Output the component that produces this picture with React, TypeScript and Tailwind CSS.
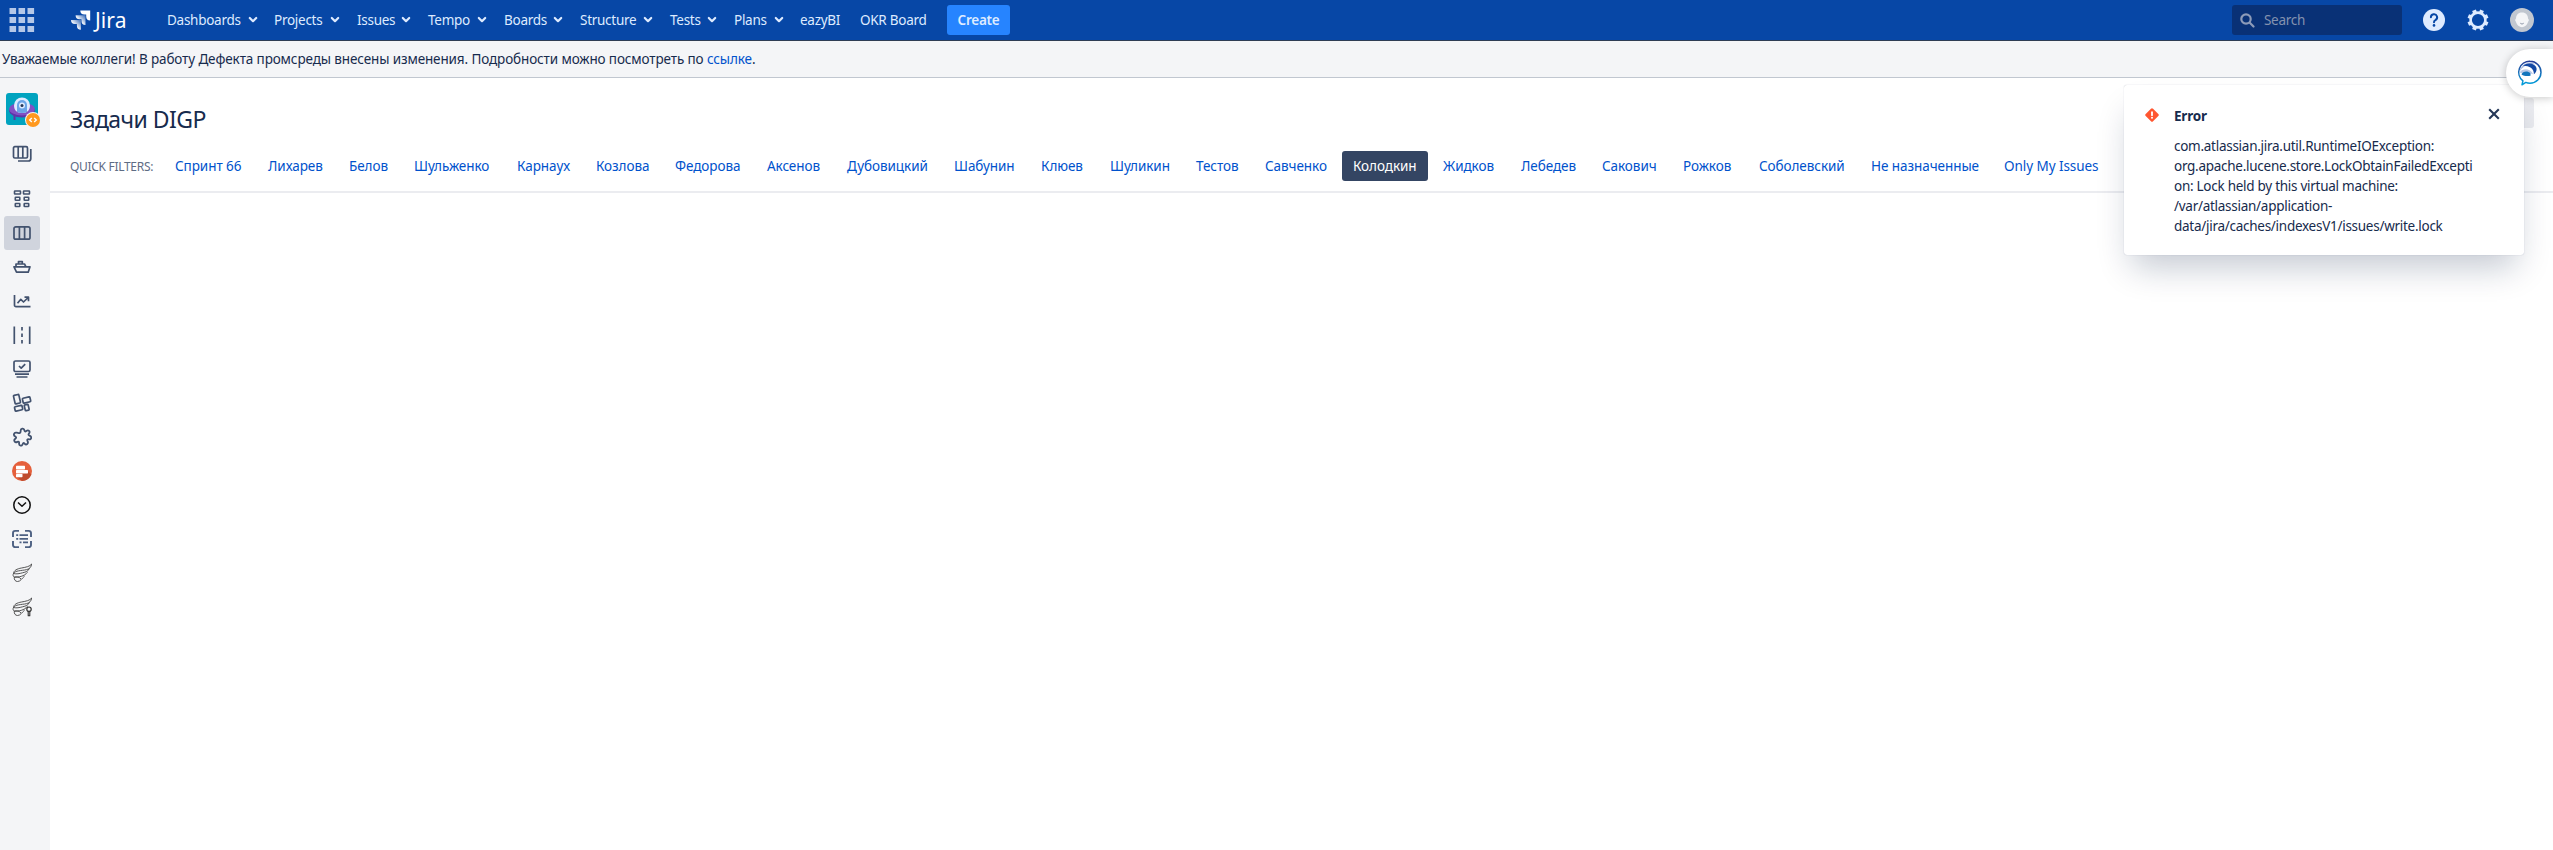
import React, { ReactNode } from 'react';

const Chevron = () => (
  <svg width="10" height="8" viewBox="0 0 10 8" className="shrink-0" fill="none" stroke="currentColor" strokeWidth="2.2" strokeLinecap="round" strokeLinejoin="round">
    <path d="M1.800 2 5 5.200 8.200 2" />
  </svg>
);

type NavProps = { label: string; width: string; text?: string; menu?: boolean };

const NavItem = ({ label, width, text = '', menu = true }: NavProps) => (
  <a className={`flex shrink-0 items-center whitespace-nowrap ${width}`}>
    <span className={`shrink-0 ${text}`}>{label}</span>
    {menu && <Chevron />}
  </a>
);

const filters: [string, string][] = [
  ['Спринт 66', 'w-[93px]'],
  ['Лихарев', 'w-[81px]'],
  ['Белов', 'w-[65px]'],
  ['Шульженко', 'w-[103px]'],
  ['Карнаух', 'w-[79px]'],
  ['Козлова', 'w-[79px]'],
  ['Федорова', 'w-[92px]'],
  ['Аксенов', 'w-[80px]'],
  ['Дубовицкий', 'w-[107px]'],
  ['Шабунин', 'w-[87px]'],
  ['Клюев', 'w-[69px]'],
  ['Шуликин', 'w-[86px]'],
  ['Тестов', 'w-[69px]'],
  ['Савченко', 'w-[88px]'],
  ['Колодкин', 'w-[90px]'],
  ['Жидков', 'w-[78px]'],
  ['Лебедев', 'w-[81px]'],
  ['Сакович', 'w-[81px]'],
  ['Рожков', 'w-[76px]'],
  ['Соболевский', 'w-[112px]'],
  ['Не назначенные', 'w-[133px]'],
  ['Only My Issues', 'w-[120px]'],
];

const activeFilter = 'Колодкин';

const Row = ({ children, active = false }: { children: ReactNode; active?: boolean }) => (
  <div className={`flex h-[34px] w-9 shrink-0 items-center justify-center rounded-[3px] text-[#42526e] ${active ? 'bg-[#d0d4dd]' : ''}`}>
    <svg width="20" height="20" viewBox="0 0 20 20" fill="none" stroke="currentColor" strokeWidth="1.700" strokeLinejoin="round">
      {children}
    </svg>
  </div>
);

const ProjectAvatar = () => (
  <svg width="36" height="36" viewBox="0 0 36 36" className="ml-[2px] shrink-0">
    <rect width="32" height="32" rx="3" fill="#00a3bf" />
    <path d="M8.500 22v5M22 22v4" stroke="#5e35a8" strokeWidth="2" />
    <ellipse cx="16" cy="17.500" rx="12.800" ry="7" fill="#5e35a8" />
    <ellipse cx="16" cy="16" rx="12.800" ry="6.500" fill="#8250c4" />
    <path d="M8 12.500a8 8 0 0 1 16 0c0 4.500-2.500 7.500-8 7.500s-8-3-8-7.500Z" fill="#deebff" />
    <path d="M11 12a5 5 0 0 1 10 0v7c-3 1.300-7 1.300-10 0Z" fill="#6ba5e7" />
    <circle cx="16" cy="12.500" r="3" fill="#deebff" />
    <circle cx="16" cy="12.500" r="1.500" fill="#253858" />
    <circle cx="27" cy="27" r="8" fill="#f4f5f7" />
    <circle cx="27" cy="27" r="7" fill="#ff991f" />
    <path d="m25.800 24.900-2.100 2.100 2.100 2.100M28.200 24.900l2.100 2.100-2.100 2.100" fill="none" stroke="#fff" strokeWidth="1.400" />
  </svg>
);

const wing = (
  <path
    d="M19.600 1C18 3.500 14 4.200 9.500 5 5 5.800 1.700 7.500 1.500 10.500M19.600 1c-.2 3-2 5-5.200 5.700C9.500 7.700 3 7.500 1.500 10.500c3 .8 6 .1 9-.7 3.300-.8 6-1.400 6.800-4.500M1.500 10.500c-.8 1.500-.4 3 .8 3.600 4.200.2 10-.7 13.200-4.800M2.300 14.100c-.4 2.500 1 4.400 3.200 4.400 3 0 4-2.800 7.200-5.500M2.300 14.100c2.700-.4 5-.3 6.700 1.900"
    strokeWidth=".900"
    stroke="#444"
  />
);

const Sidebar = () => (
  <aside className="flex w-[50px] shrink-0 flex-col bg-[#f4f5f7] pl-1 pt-[15px]">
    <ProjectAvatar />
    <div className="mb-3 mt-[7px]">
      <Row>
        <path d="M1.500 5a1.300 1.300 0 0 1 1.300-1.300h11.400A1.300 1.300 0 0 1 15.500 5v8.700a1.300 1.300 0 0 1-1.300 1.300H2.800a1.300 1.300 0 0 1-1.300-1.300ZM6.200 3.700V15M10.800 3.700V15" />
        <path d="M18.800 6v9.500a2.500 2.500 0 0 1-2.500 2.500H6" />
      </Row>
    </div>
    <Row>
      <g strokeWidth="1.600">
        <rect x="2.500" y="2" width="6" height="3" rx=".5" />
        <rect x="11.500" y="2" width="6" height="3" rx=".5" />
        <rect x="3.300" y="8.300" width="4.500" height="3" rx=".5" />
        <rect x="12.200" y="8.300" width="4.500" height="3" rx=".5" />
        <rect x="3.300" y="14.500" width="4.500" height="3" rx=".5" />
        <rect x="12.200" y="14.500" width="4.500" height="3" rx=".5" />
      </g>
    </Row>
    <Row active>
      <rect x="2" y="3.800" width="16" height="12.400" rx="1.800" />
      <path d="M7.400 4v12M12.600 4v12" />
    </Row>
    <Row>
      <path d="M2 9.800h16l-1.800 5.400H4.500ZM4 9.800V7h8.500l1.500 2.800M6.500 7V4.600h3.800V7" />
    </Row>
    <Row>
      <path d="M2.500 4v10.200a1.500 1.500 0 0 0 1.500 1.500h14.500M5.500 12.300l3.300-4 2.700 2.700 4.700-4.500M12.500 6.200h4v4" />
    </Row>
    <Row>
      <path d="M2.300 1.500v17.500M17.700 1.500v17.500" />
      <path d="M10 2v17" strokeDasharray="3.500 3" />
    </Row>
    <Row>
      <rect x="2" y="2" width="16" height="10.500" rx="1.500" />
      <path d="m7 7 2.200 2.100 4-4M3 15.200h14M4.500 18h11" />
    </Row>
    <Row>
      <rect x="2.200" y="1.800" width="5.500" height="8.700" rx=".8" transform="rotate(-13 5 6)" />
      <rect x="10.700" y="4.500" width="7.700" height="5" rx=".8" transform="rotate(-13 14.500 7)" />
      <rect x="2.700" y="13" width="7.700" height="4.500" rx=".8" transform="rotate(-13 6.500 15)" />
      <rect x="12.700" y="11.500" width="4" height="6" rx=".8" transform="rotate(-13 14.700 14.500)" />
    </Row>
    <Row>
      <path d="M8.600 4.600C8.300 1.200 12 .8 12.300 3.200c.2 1.500 1 1.600 2 .8 2.200-1.500 4.200.6 2.700 2.500-.8 1-.6 1.700.5 2.200 2.700 1 2 4.200-.6 3.600-1.500-.3-2 .5-1.400 1.700 1.400 2.600-1.200 4.600-2.900 2.600-.9-1-1.600-.7-1.900.5-.6 2.500-4 1.700-3.600-.9.200-1.500-.6-2-1.800-1.300-2.300 1.300-4.200-1.500-2-3.100 1.200-.9 1.100-1.600-.1-2.300C.9 8.200 2 4.900 4.700 5.700c2 .7 4 .6 3.900-1.100Z" strokeWidth="1.800" />
    </Row>
    <Row>
      <circle cx="10" cy="10" r="10" fill="#e5603c" stroke="none" />
      <path d="m15 9 4.300 4.500A10 10 0 0 1 10 20l-5-4Z" fill="#c04c2e" stroke="none" />
      <g fill="#fff" stroke="none">
        <rect x="4" y="4.800" width="9" height="3.600" rx=".6" />
        <rect x="4" y="9" width="12" height="3.400" rx=".6" />
        <rect x="4" y="13" width="6.500" height="3.200" rx=".6" />
      </g>
    </Row>
    <Row>
      <circle cx="10" cy="10" r="8.200" stroke="#111" strokeWidth="1.500" />
      <path d="m6 7.500 4 3.700 4-3.700" stroke="#111" strokeWidth="1.500" />
    </Row>
    <Row>
      <path d="M7 1.900H3.200a2.200 2.200 0 0 0-2.200 2.200V8M13 1.900h3.800A2.200 2.200 0 0 1 19 4.100V8M7 18.100H3.200A2.200 2.200 0 0 1 1 15.900V12M13 18.100h3.800a2.200 2.200 0 0 0 2.200-2.200V12" strokeWidth="1.900" stroke="#4c6082" />
      <path d="M4.200 6.200h2M7.500 6.200h8.500M4.200 9.800h2M7.500 9.800h8.500M7.500 13.400h2M11 13.400h5" strokeWidth="1.700" stroke="#4c6082" />
    </Row>
    <Row>{wing}</Row>
    <Row>
      {wing}
      <path d="M14.500 12h5v7.500h-5z" fill="#f4f5f7" stroke="none" />
      <circle cx="17" cy="12.200" r="2.200" fill="#f4f5f7" stroke="#333" strokeWidth="1.200" />
      <path d="M16.200 14.300v4.500h1.600v-4.500" stroke="#333" strokeWidth="1.100" />
    </Row>
  </aside>
);

const Header = () => (
  <header className="flex h-[41px] shrink-0 items-center border-b border-[#2e3d54] bg-[#0747a6] tracking-[-0.27px] text-[#deebff]">
    <svg width="26" height="26" viewBox="0 0 26 26" className="ml-[9px]" fill="#b4c8e8">
      {[0, 9, 18].map((y) => [0, 9, 18].map((x) => <rect key={`${x}-${y}`} x={x + 0.5} y={y + 1} width="6.600" height="6" />))}
    </svg>
    <span className="ml-[36px] flex w-[96px] items-center gap-1">
      <svg width="20" height="20" viewBox="0 0 20 20">
        <defs>
          <linearGradient id="fade" x1="1" y1="0" x2="0.400" y2="0.600">
            <stop offset="0.200" stopColor="#fff" stopOpacity=".35" />
            <stop offset="1" stopColor="#fff" />
          </linearGradient>
        </defs>
        <path fill="#fff" d="M9.300.5h9.900v9.900a4 4 0 0 1-4-4V4.500h-1.900a4 4 0 0 1-4-4Z" />
        <path fill="url(#fade)" d="M4.600 5.200h9.900v9.900a4 4 0 0 1-4-4V9.200H8.600a4 4 0 0 1-4-4Z" />
        <path fill="url(#fade)" d="M0 9.900h9.900v9.900a4 4 0 0 1-4-4v-1.900H4a4 4 0 0 1-4-4Z" />
      </svg>
      <span className="text-[21px] leading-none tracking-[0.1px] text-white">Jira</span>
    </span>
    <NavItem label="Dashboards" width="w-[107px]" text="w-[81px]" />
    <NavItem label="Projects" width="w-[83px]" text="w-[56px]" />
    <NavItem label="Issues" width="w-[71px]" text="w-[44px]" />
    <NavItem label="Tempo" width="w-[76px]" text="w-[49px]" />
    <NavItem label="Boards" width="w-[76px]" text="w-[49px]" />
    <NavItem label="Structure" width="w-[90px]" text="w-[63px]" />
    <NavItem label="Tests" width="w-[64px]" text="w-[37px]" />
    <NavItem label="Plans" width="w-[66px]" text="w-[40px]" />
    <NavItem label="eazyBI" width="w-[60px]" menu={false} />
    <NavItem label="OKR Board" width="w-[87px]" menu={false} />
    <button className="h-[30px] w-[63px] rounded-[3px] bg-[#2684ff] font-semibold">Create</button>
    <div className="ml-auto mr-[21px] flex h-[30px] w-[170px] items-center rounded-[3px] bg-[#093176] pl-2 text-[#8492af]">
      <svg width="15" height="15" viewBox="0 0 15 15" fill="none" stroke="#8d9bb8" strokeWidth="2.200" strokeLinecap="round">
        <circle cx="6" cy="6" r="4.700" />
        <path d="m9.800 9.800 3.700 3.700" />
      </svg>
      <span className="ml-[9px] mt-px tracking-[-0.3px]">Search</span>
    </div>
    <svg width="22" height="22" viewBox="0 0 22 22">
      <circle cx="11" cy="11" r="11" fill="#deebff" />
      <path d="M7.900 8.300a3.100 3.100 0 1 1 4.600 2.700c-1 .6-1.500 1-1.500 2.200" fill="none" stroke="#0747a6" strokeWidth="2" strokeLinecap="round" />
      <circle cx="11" cy="16.400" r="1.300" fill="#0747a6" />
    </svg>
    <svg width="22" height="22" viewBox="0 0 22 22" className="ml-[22px]" stroke="#deebff" fill="none">
      <circle cx="11" cy="11" r="7.400" strokeWidth="2.600" />
      {[22.5, 67.5, 112.5, 157.5, 202.5, 247.5, 292.5, 337.5].map((a) => (
        <path key={a} d="M11 3.500V.5" strokeWidth="4" transform={`rotate(${a} 11 11)`} />
      ))}
    </svg>
    <svg width="24" height="24" viewBox="0 0 24 24" className="ml-[21px] mr-[19px]">
      <circle cx="12" cy="12" r="12" fill="#c1c7d0" />
      <path d="M12 4.500c4 0 6 2.700 6 6l1 1.500-1 2c-.8 3-3.500 5.200-6 5.200S6.800 17 6 14l-1-2 1-1.500c0-3.300 2-6 6-6Z" fill="#f4f5f7" />
      <path d="M10.300 15.200c1 1 2.400 1 3.400 0" fill="none" stroke="#8993a4" strokeWidth="1" />
    </svg>
  </header>
);

const ErrorFlag = () => (
  <section className="absolute right-[29px] top-[85px] flex h-[170px] w-[400px] rounded-[3px] bg-white pl-[21px] shadow-[0_20px_32px_-8px_rgba(9,30,66,0.24),0_0_1px_rgba(9,30,66,0.3)]">
    <svg width="14" height="14" viewBox="0 0 14 14" className="mt-[23px]">
      <rect x="1.800" y="1.800" width="10.400" height="10.400" rx="1.500" transform="rotate(45 7 7)" fill="#ff5630" />
      <path d="M7 4.200v3" stroke="#fff" strokeWidth="1.800" strokeLinecap="round" />
      <circle cx="7" cy="9.700" r="1" fill="#fff" />
    </svg>
    <div className="ml-[15px] w-[320px] shrink-0 pt-[21px] leading-5">
      <h2 className="font-bold tracking-[-0.2px]">Error</h2>
      <p className="mt-[10px] whitespace-nowrap tracking-[-0.27px]">
        com.atlassian.jira.util.RuntimeIOException:<br />
        org.apache.lucene.store.LockObtainFailedExcepti<br />
        on: Lock held by this virtual machine:<br />
        /var/atlassian/application-<br />
        data/jira/caches/indexesV1/issues/write.lock
      </p>
    </div>
    <svg width="12" height="12" viewBox="0 0 12 12" className="-ml-[6px] mt-[23px] shrink-0" stroke="#253858" strokeWidth="2.100">
      <path d="m1.200 1.200 9.600 9.600M10.800 1.200l-9.600 9.600" />
    </svg>
  </section>
);

const FeedbackTab = () => (
  <div className="absolute right-0 top-[49px] flex h-12 w-[47px] items-center rounded-l-full bg-white pl-[11px] shadow-[0_1px_9px_rgba(0,0,0,0.22)]">
    <svg width="26" height="28" viewBox="0 0 26 28">
      <defs>
        <linearGradient id="bubble" x1="0" y1="0" x2="0" y2="1">
          <stop offset="0" stopColor="#253c96" />
          <stop offset="1" stopColor="#00a0dc" />
        </linearGradient>
      </defs>
      <path d="M13 2.200a11 11 0 0 1 0 22c-1.600 0-2.900-.2-4.200-.8L5 25.800l.9-4A11 11 0 0 1 13 2.200Z" fill="#fff" stroke="url(#bubble)" strokeWidth="1.500" strokeLinejoin="round" />
      <path d="M2.500 12.500C4 5 13 .5 18.500 5.500 9.500 4.500 6 8 2.500 12.500Z" fill="#a9b8df" />
      <path d="M6 6.800c5-4 12-2.500 13.500 2.200.6 3-1 5-2.600 6.300.3-6.200-5.400-8.800-10.900-8.500Z" fill="#1449a4" />
      <path d="M2.800 13.500C5 9.500 13 8.500 16.300 15.500c-3-2.500-8.500.8-13.500-2Z" fill="#b9c9e8" />
      <path d="M4.500 15.500c1-3 6-4.500 9-1v2.200c-3 .6-6.500.5-9-1.200Z" fill="#1376bd" />
    </svg>
  </div>
);

export default function App() {
  return (
    <div className="relative flex h-[850px] w-[2553px] flex-col overflow-hidden bg-white font-['Noto_Sans',sans-serif] text-[13.5px] text-[#172b4d]">
      <Header />
      <div className="flex h-[37px] shrink-0 items-center border-b border-[#c1c7d0] bg-[#f4f5f7] pl-[2px]">
        <span className="mt-px tracking-[-0.12px]">
          Уважаемые коллеги! В работу Дефекта промсреды внесены изменения. Подробности можно посмотреть по <a className="text-[#0052cc]">ссылке</a>.
        </span>
      </div>
      <div className="flex min-h-0 flex-1">
        <Sidebar />
        <main className="flex min-w-0 flex-1 flex-col">
          <div className="flex h-[73px] items-start justify-between pl-5 pr-[19px] pt-5">
            <h1 className="mt-[5px] text-[23px] leading-8 tracking-[-0.55px]">Задачи DIGP</h1>
            <button className="h-[30px] w-[60px] rounded-[3px] bg-[#ebecf0]" aria-label="Board" />
          </div>
          <div className="flex h-[42px] items-start border-b-2 border-[#ebecf0] pl-5">
            <span className="w-[94px] shrink-0 whitespace-nowrap text-xs leading-[31px] tracking-[-0.3px] text-[#5e6c84]">QUICK FILTERS:</span>
            {filters.map(([name, width]) => (
              <div key={name} className={`shrink-0 ${width}`}>
                <a className={`inline-block whitespace-nowrap rounded-[3px] px-[11px] leading-[30px] tracking-[-0.06px] ${name === activeFilter ? 'bg-[#344563] text-white' : 'text-[#0052cc]'}`}>{name}</a>
              </div>
            ))}
          </div>
        </main>
      </div>
      <ErrorFlag />
      <FeedbackTab />
    </div>
  );
}
